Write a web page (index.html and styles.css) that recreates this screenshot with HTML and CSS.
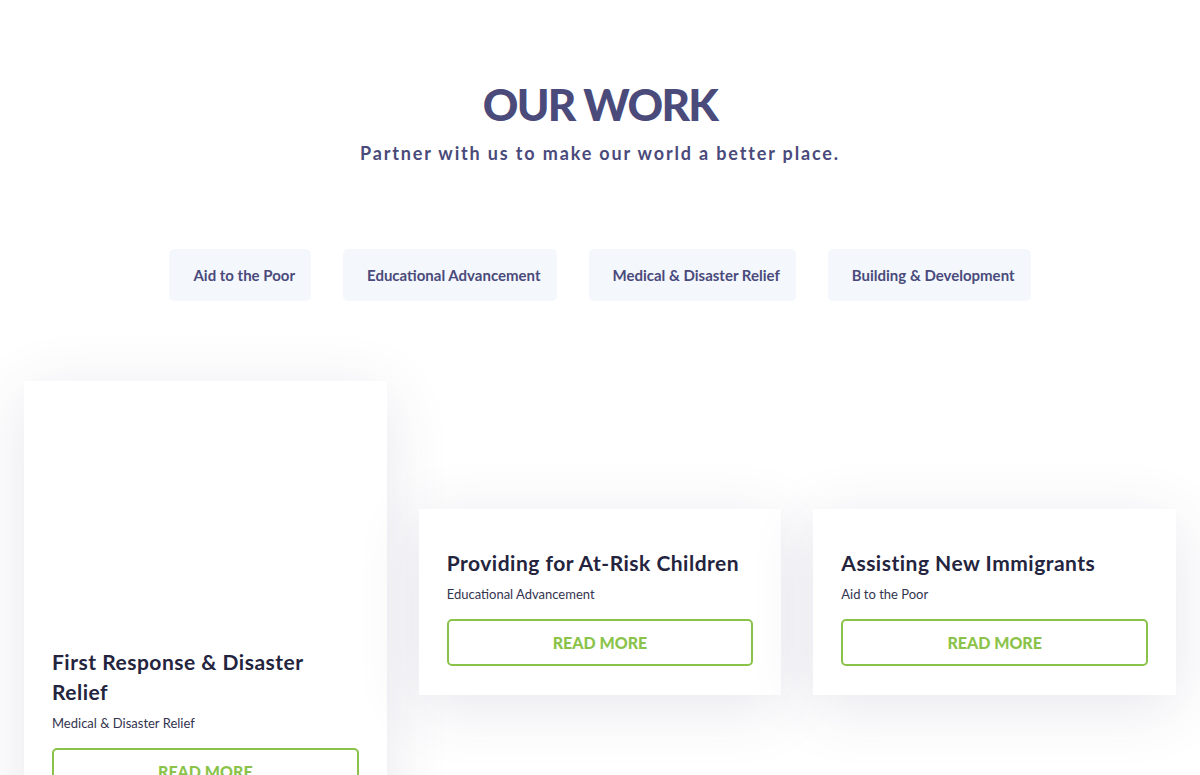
FILE: index.html
```html
<!DOCTYPE html>
<html lang="en">
<head>
<meta charset="utf-8">
<title>Our Work</title>
<link rel="stylesheet" href="styles.css">
</head>
<body>
<section class="work">
  <header class="work-head">
    <h1 class="work-title">OUR WORK</h1>
    <p class="work-sub">Partner with us to make our world a better place.</p>
  </header>
  <nav class="filters">
    <button class="filter">Aid to the Poor</button>
    <button class="filter">Educational Advancement</button>
    <button class="filter">Medical &amp; Disaster Relief</button>
    <button class="filter">Building &amp; Development</button>
  </nav>
  <div class="cards">
    <article class="card card-tall">
      <div class="card-media"></div>
      <div class="card-body">
        <h2 class="card-title">First Response &amp; Disaster Relief</h2>
        <p class="card-cat">Medical &amp; Disaster Relief</p>
        <a class="card-btn" href="#">READ MORE</a>
      </div>
    </article>
    <article class="card card-short">
      <div class="card-body">
        <h2 class="card-title">Providing for At-Risk Children</h2>
        <p class="card-cat">Educational Advancement</p>
        <a class="card-btn" href="#">READ MORE</a>
      </div>
    </article>
    <article class="card card-short">
      <div class="card-body">
        <h2 class="card-title">Assisting New Immigrants</h2>
        <p class="card-cat">Aid to the Poor</p>
        <a class="card-btn" href="#">READ MORE</a>
      </div>
    </article>
  </div>
</section>
</body>
</html>
```
FILE: styles.css
```css
* { box-sizing: border-box; }
html, body { margin: 0; padding: 0; background: #ffffff; }
body {
  font-family: "Lato", "Liberation Sans", sans-serif;
  color: #24243e;
  overflow: hidden;
  height: 775px;
}
.work { padding-top: 76px; }
.work-head { text-align: center; }
.work-title {
  margin: 0;
  font-size: 44px;
  line-height: 56px;
  font-weight: 900;
  color: #4a4a7b;
  letter-spacing: -1.7px;
}
.work-sub {
  margin: 9px 0 0;
  font-size: 18px;
  line-height: 24px;
  font-weight: 700;
  color: #4a4a7b;
  letter-spacing: 1.85px;
}
.filters {
  display: flex;
  justify-content: center;
  gap: 32px;
  margin-top: 84px;
}
.filter {
  height: 52px;
  padding: 0 16px 0 24px;
  border: 0;
  border-radius: 5px;
  background: #f4f8fd;
  font-family: inherit;
  font-size: 15px;
  font-weight: 700;
  color: #4a4a7b;
  cursor: pointer;
}
.cards {
  display: grid;
  grid-template-columns: repeat(3, 1fr);
  gap: 32px;
  align-items: start;
  padding: 0 24px;
  margin-top: 80px;
}
.card {
  background: #ffffff;
  box-shadow: 0 12px 60px rgba(60, 60, 110, 0.12);
}
.card-short { margin-top: 128px; }
.card-media { height: 227px; }
.card-body { padding: 39px 28px 29px; }
.card-title {
  margin: 0;
  font-size: 21px;
  line-height: 30px;
  font-weight: 700;
  color: #24243e;
  letter-spacing: 0.5px;
}
.card-cat {
  margin: 7px 0 16px;
  font-size: 13px;
  line-height: 18px;
  font-weight: 400;
  color: #34344f;
}
.card-btn {
  display: flex;
  align-items: center;
  justify-content: center;
  height: 47px;
  border: 2px solid #8bc34a;
  border-radius: 5px;
  font-size: 16px;
  font-weight: 900;
  color: #8bc34a;
  text-decoration: none;
}
```
